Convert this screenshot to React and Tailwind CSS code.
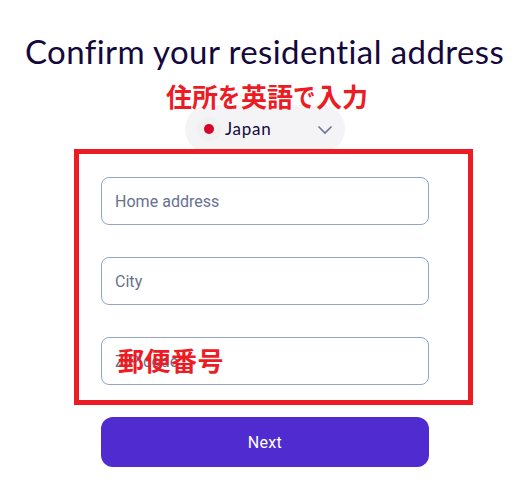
import React from "react";

function Field({ label }) {
  return (
    <div className="flex h-12 w-[328px] items-center rounded-lg border border-[#92a6c4] bg-white px-[13px] pt-[2px] text-[16px] tracking-[0.03px] text-[#68708f]">
      <span className="whitespace-nowrap">{label}</span>
    </div>
  );
}

function Kana({ children }) {
  return <span className="inline-block w-[23px] origin-left scale-x-[0.86]">{children}</span>;
}

export default function App() {
  return (
    <main className="relative h-[489px] w-[519px] overflow-hidden bg-white font-['Roboto','Noto_Sans_CJK_JP',sans-serif] text-[#15083c]">
      <h1 className="pt-[31px] pl-[25px] font-['Lato',sans-serif] text-[33px] leading-[40px] font-normal tracking-[0.4px] whitespace-nowrap [font-variant-ligatures:none]">Confirm your residential address</h1>
      <div className="mt-[34px] ml-[185px] flex h-12 w-40 items-center rounded-full bg-[#f4f4f7] px-3">
        <span className="flex size-6 items-center justify-center rounded-full bg-[#f0f0f0]">
          <span className="size-[10px] rounded-full bg-[#d80027]" />
        </span>
        <span className="ml-1 flex-1 font-['Lato',sans-serif] text-[17px] leading-6 tracking-[0.75px]">Japan</span>
        <svg className="size-4" viewBox="0 0 16 16" fill="none" stroke="#68759b" strokeWidth="1.6">
          <path d="M1.5 5.5 8 12l6.5-6.5" />
        </svg>
      </div>
      <div className="relative -mt-1 ml-[74px] flex h-[256px] w-[399px] flex-col gap-8 border-[5px] border-[#ed1c24] bg-white pt-[23px] pl-[22px]">
        <Field label="Home address" />
        <Field label="City" />
        <Field label="ZIP code" />
      </div>
      <button className="mt-3 ml-[101px] h-[50px] w-[328px] rounded-xl bg-[#4f2bd0] pt-[2px] text-[16px] tracking-[0.3px] text-white">Next</button>
      <span className="absolute top-[77px] left-[166px] font-['Noto_Sans_CJK_JP',sans-serif] text-[26px] leading-[38px] font-bold whitespace-nowrap text-[#ed1c24]">住所<Kana>を</Kana>英語<Kana>で</Kana>入力</span>
      <span className="absolute top-[341px] left-[118px] font-['Noto_Sans_CJK_JP',sans-serif] text-[26px] leading-[38px] font-bold tracking-[0.5px] whitespace-nowrap text-[#ed1c24]">郵便番号</span>
    </main>
  );
}
